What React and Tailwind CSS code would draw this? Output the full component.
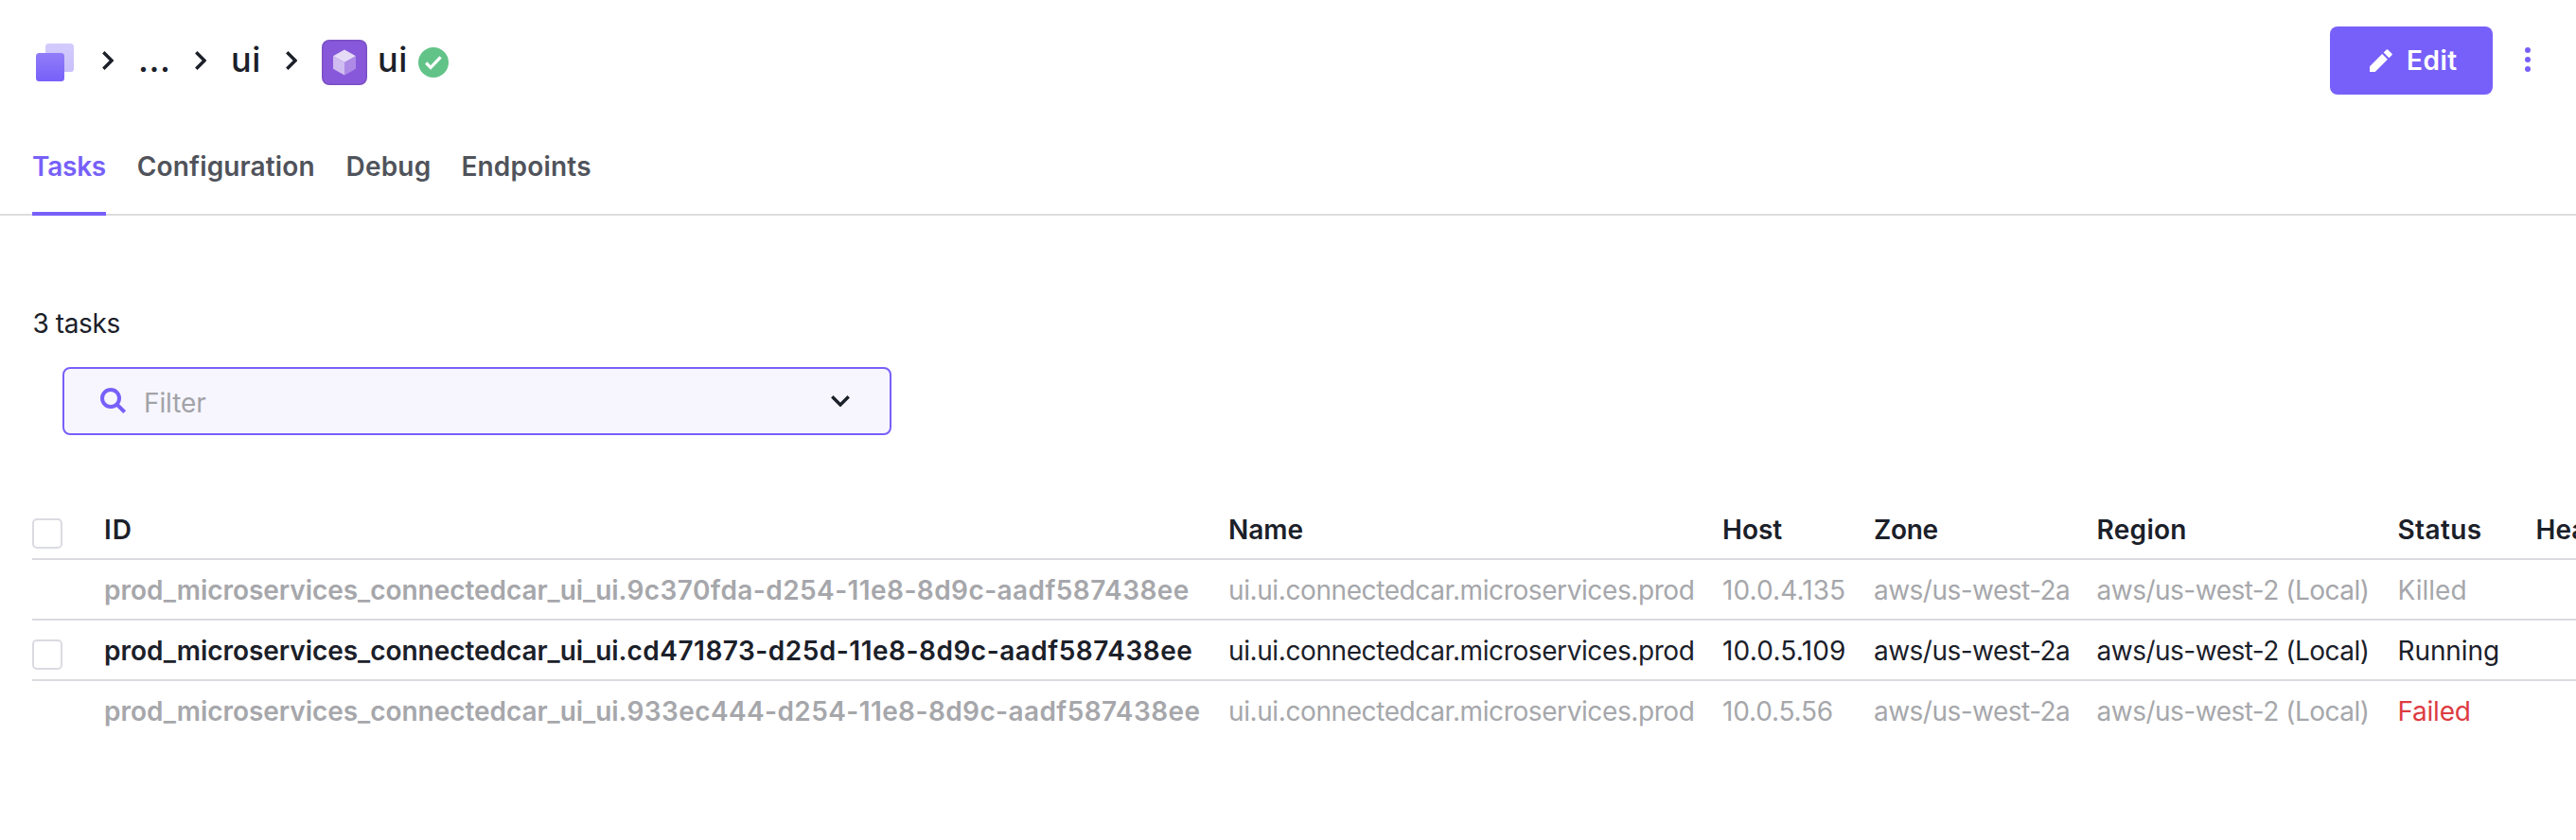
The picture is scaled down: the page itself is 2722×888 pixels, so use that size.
import clsx from 'clsx';

const tabs = [
  { label: 'Tasks', cls: 'tracking-[-0.24px]', active: true },
  { label: 'Configuration', cls: 'pl-[0.8px] tracking-[0.13px]' },
  { label: 'Debug', cls: 'pl-[0.8px] tracking-[0.2px]' },
  { label: 'Endpoints', cls: 'tracking-[0.2px]' },
];

const columns = [
  { label: 'ID', cls: 'tracking-[1px]' },
  { label: 'Name', cls: '' },
  { label: 'Host', cls: '' },
  { label: 'Zone', cls: 'tracking-[-0.3px]' },
  { label: 'Region', cls: 'tracking-[0.3px]' },
  { label: 'Status', cls: 'tracking-[0.4px]' },
  { label: 'Health', cls: '' },
];

const tasks = [
  {
    uuid: '9c370fda-d254-11e8-8d9c-aadf587438ee',
    uuidCls: 'tracking-[0.42px]',
    host: '10.0.4.135',
    hostCls: 'tracking-[0.1px]',
    status: 'Killed',
    statusCls: '',
  },
  {
    uuid: 'cd471873-d25d-11e8-8d9c-aadf587438ee',
    uuidCls: 'tracking-[0.5px]',
    host: '10.0.5.109',
    hostCls: 'tracking-[0.2px]',
    status: 'Running',
    statusCls: 'tracking-[-0.1px]',
    active: true,
  },
  {
    uuid: '933ec444-d254-11e8-8d9c-aadf587438ee',
    uuidCls: 'tracking-[0.4px]',
    host: '10.0.5.56',
    hostCls: 'tracking-[-0.18px]',
    status: 'Failed',
    statusCls: 'text-[#dd3c41] tracking-[-0.25px]',
  },
];

const GRID =
  'grid h-16 grid-cols-[76px_1188px_522px_160px_235.5px_318px_146px_240px] items-center whitespace-nowrap pt-[2px]';

function ChevronRight() {
  return (
    <svg className="h-5 w-3 shrink-0" viewBox="0 0 12 20" fill="none">
      <path d="M1.3 1.3 10 10l-8.700 8.700" stroke="#1b2029" strokeWidth="3.400" />
    </svg>
  );
}

function ServicesLogo() {
  return (
    <svg className="mt-1 h-10 w-10 shrink-0" viewBox="0 0 40 40">
      <defs>
        <linearGradient id="front" x1="0" y1="0" x2="0" y2="1">
          <stop offset="0" stopColor="#917df8" />
          <stop offset="1" stopColor="#7760f9" />
        </linearGradient>
        <linearGradient id="back" x1="0" y1="0" x2="0" y2="1">
          <stop offset="0" stopColor="#d4cbfc" />
          <stop offset="1" stopColor="#c9bffb" />
        </linearGradient>
      </defs>
      <rect x="10" y="0" width="30" height="30" rx="3.500" fill="url(#back)" />
      <rect x="0" y="10" width="30" height="30" rx="3.500" fill="url(#front)" />
    </svg>
  );
}

function PackageIcon() {
  return (
    <svg className="mt-1 h-12 w-12 shrink-0" viewBox="0 0 48 48">
      <rect width="48" height="48" rx="8" fill="#7b50c4" />
      <rect x="1.500" y="1.500" width="45" height="45" rx="6.500" fill="#8858db" />
      <path d="M24 10.500 36 17.200 24 24 12 17.200Z" fill="#e5dbf7" />
      <path d="M12 17.200 24 24V37.500L12 30.700Z" fill="#cfbcf0" />
      <path d="M36 17.200 24 24V37.500L36 30.700Z" fill="#ad8ae6" />
    </svg>
  );
}

function HealthyIcon() {
  return (
    <svg className="mt-1 h-8 w-8 shrink-0" viewBox="0 0 32 32" fill="none">
      <circle cx="16" cy="16" r="16" fill="#62c388" />
      <path d="m8.200 16.500 4.900 4.900L23.600 10.400" stroke="#fff" strokeWidth="3.200" />
    </svg>
  );
}

function Checkbox() {
  return <span className="mt-2 block size-8 rounded-[5px] border-2 border-[#dadbe2] bg-white" />;
}

export default function App() {
  return (
    <div className="h-[888px] w-full overflow-hidden bg-white font-['Inter','Liberation_Sans',sans-serif] text-[28px] leading-10 text-[#1b2029]">
      <header className="flex h-32 items-center justify-between pl-[38px] pr-12">
        <nav className="flex items-center text-[36px] font-medium tracking-[0.6px]">
          <ServicesLogo />
          <span className="ml-[30px]"><ChevronRight /></span>
          <span className="ml-[26px] w-[60px] pb-[2px]">...</span>
          <ChevronRight />
          <span className="ml-[26px] w-[58px] pb-[2px]">ui</span>
          <ChevronRight />
          <span className="ml-[26px]"><PackageIcon /></span>
          <span className="ml-[11px] w-[43px] pb-[2px]">ui</span>
          <HealthyIcon />
        </nav>
        <div className="flex items-center gap-[34px]">
          <button className="flex h-[72px] w-[172px] items-center rounded-lg bg-[#7760f9] pl-[42px] font-semibold text-white">
            <svg className="size-6 shrink-0" viewBox="0 0 24 24" fill="#fff">
              <path d="M0 18.300 13.200 5.100 18.900 10.800 5.700 24H0Z" />
              <path d="M14.700 3.600 17.800.5Q18.500-.2 19.200.5L23.500 4.800Q24.200 5.500 23.500 6.200L20.400 9.300Z" />
            </svg>
            <span className="ml-[15px] tracking-[0.5px]">Edit</span>
          </button>
          <svg className="-mt-[2px] h-[26px] w-[6px]" viewBox="0 0 6 26" fill="#7760f9">
            <circle cx="3" cy="3" r="3" />
            <circle cx="3" cy="13" r="3" />
            <circle cx="3" cy="23" r="3" />
          </svg>
        </div>
      </header>

      <div className="flex h-[100px] gap-8 border-b-2 border-[#dddde0] pl-[34px] font-semibold">
        {tabs.map((tab) => (
          <div
            key={tab.label}
            className={clsx(
              'h-[100px] pt-[28px]',
              tab.cls,
              tab.active ? 'w-[78px] border-b-4 border-[#7760f9] text-[#7760f9]' : 'text-[#50535b]',
            )}
          >
            {tab.label}
          </div>
        ))}
      </div>

      <main className="pl-[34px]">
        <p className="mt-[94px] pl-[0.5px] tracking-[-0.4px]">3 tasks</p>
        <div className="ml-8 mt-[26px] flex h-[72px] w-[876px] items-center rounded-lg border-2 border-[#7760f9] bg-[#f7f6fe] pl-[38px] pr-[42px]">
          <svg className="-mt-px size-7 shrink-0" viewBox="0 0 28 28" fill="none" stroke="#7760f9" strokeWidth="4">
            <circle cx="11" cy="11" r="9" />
            <path d="m17.500 17.500 8.200 8.200" />
          </svg>
          <span className="ml-[18px] flex-1 pt-1 tracking-[-0.1px] text-[#a2a3a8]">Filter</span>
          <svg className="h-3 w-5 shrink-0" viewBox="0 0 20 12" fill="none">
            <path d="M1.300 1.300 10 10l8.700-8.700" stroke="#1b2029" strokeWidth="3.400" />
          </svg>
        </div>

        <div className="mt-[68px]">
          <div className={clsx(GRID, 'border-b-2 border-[#dadbe0] font-semibold')}>
            <Checkbox />
            {columns.map((c) => (
              <span key={c.label} className={c.cls}>{c.label}</span>
            ))}
          </div>
          {tasks.map((t, i) => (
            <div
              key={t.uuid}
              className={clsx(
                GRID,
                i < tasks.length - 1 ? 'border-b-2 border-[#dadbe0]' : 'pb-[2px]',
                t.active ? 'text-[#1b2029]' : 'text-[#a6a7ab]',
              )}
            >
              <span>{t.active && <Checkbox />}</span>
              <span className="font-semibold">
                <span className="tracking-[-0.04px]">prod_microservices_connectedcar_ui_ui.</span>
                <span className={t.uuidCls}>{t.uuid}</span>
              </span>
              <span className="tracking-[-0.4px]">ui.ui.connectedcar.microservices.prod</span>
              <span className={t.hostCls}>{t.host}</span>
              <span className="tracking-[-0.52px]">aws/us-west-2a</span>
              <span className="tracking-[-0.5px]">aws/us-west-2 (Local)</span>
              <span className={t.statusCls}>{t.status}</span>
            </div>
          ))}
        </div>
      </main>
    </div>
  );
}
